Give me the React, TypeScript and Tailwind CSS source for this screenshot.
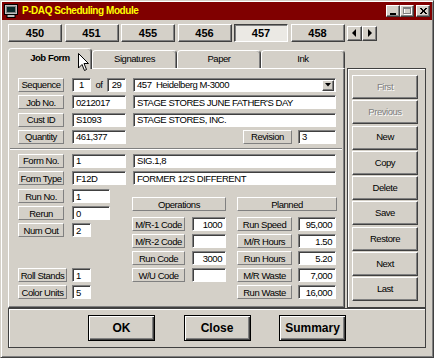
import React from "react";

const narrow = "font-['Liberation_Sans',Arial,sans-serif] tracking-[-0.45px]";
const wide = "font-['Liberation_Sans',Arial,sans-serif] tracking-normal";

const raised =
  "border border-t-white border-l-white border-r-[#404040] border-b-[#404040] shadow-[inset_-1px_-1px_#808080] bg-[#d4d0c8]";
const flat =
  "border border-t-white border-l-white border-r-[#808080] border-b-[#808080] bg-[#d4d0c8]";
const sunken =
  "border border-t-[#808080] border-l-[#808080] border-r-white border-b-white shadow-[inset_1px_1px_#404040] bg-white";

function Label({ text, w }: { text: string; w: string }) {
  return (
    <div className={`${flat} ${w} h-[14px] shrink-0 flex items-center justify-center text-[9.5px] leading-none whitespace-nowrap`}>
      {text}
    </div>
  );
}

function Field({ value, w, align = "left" }: { value: string; w: string; align?: "left" | "right" | "center" }) {
  const a = align === "right" ? "justify-end pr-[3px]" : align === "center" ? "justify-center" : "justify-start pl-[3px]";
  return (
    <div className={`${sunken} ${w} h-[14px] shrink-0 flex items-center ${a} text-[9.5px] leading-none whitespace-pre`}>
      {value}
    </div>
  );
}

function Row({ children, className = "" }: { children: React.ReactNode; className?: string }) {
  return <div className={`flex items-center h-[14px] ${className}`}>{children}</div>;
}

function MonitorIcon() {
  return (
    <svg width="14" height="14" viewBox="0 0 14 14">
      <rect x="0.5" y="0.5" width="13" height="10" fill="#c0c0c0" stroke="#000" />
      <rect x="2.5" y="2.5" width="9" height="6" fill="#0a2a2a" stroke="#808080" />
      <rect x="3" y="10.5" width="8" height="3" fill="#c0c0c0" stroke="#000" />
    </svg>
  );
}

function CapButton({ kind }: { kind: "min" | "max" | "close" }) {
  return (
    <div className={`${raised} w-[14px] h-[12px] flex items-center justify-center ${kind === "close" ? "ml-[2px]" : ""}`}>
      <svg width="10" height="9" viewBox="0 0 10 9">
        {kind === "min" && <rect x="2" y="6" width="6" height="2" fill="#000" />}
        {kind === "max" && (
          <>
            <rect x="2.5" y="1.5" width="7" height="6" fill="none" stroke="#ffffff" />
            <rect x="1.5" y="0.5" width="7" height="6" fill="none" stroke="#808080" />
            <rect x="1.5" y="0.5" width="7" height="1.5" fill="#808080" />
          </>
        )}
        {kind === "close" && (
          <path d="M2 1 L8 7 M3 1 L9 7 M8 1 L2 7 M9 1 L3 7" stroke="#000" strokeWidth="1" />
        )}
      </svg>
    </div>
  );
}

function Cursor() {
  return (
    <svg className="absolute left-[77px] top-[52px] z-20" width="12" height="19" viewBox="0 0 12 19">
      <path
        d="M0.5 0.5 L0.5 15 L4 11.5 L6.5 17.5 L8.5 16.5 L6 10.5 L10.5 10.5 Z"
        fill="#fff"
        stroke="#000"
        strokeLinejoin="miter"
      />
    </svg>
  );
}

const records = ["450", "451", "455", "456", "457", "458"];
const tabs = [
  { name: "Job Form", w: "w-[84px]" },
  { name: "Signatures", w: "w-[85px]" },
  { name: "Paper", w: "w-[84px]" },
  { name: "Ink", w: "w-[84px]" },
];
const actions = [
  { name: "First", off: true },
  { name: "Previous", off: true },
  { name: "New" },
  { name: "Copy" },
  { name: "Delete" },
  { name: "Save" },
  { name: "Restore" },
  { name: "Next" },
  { name: "Last" },
];
const operations = [
  { label: "M/R-1 Code", value: "1000" },
  { label: "M/R-2 Code", value: "" },
  { label: "Run Code", value: "3000" },
  { label: "W/U Code", value: "" },
];
const planned = [
  { label: "Run Speed", value: "95,000" },
  { label: "M/R Hours", value: "1.50" },
  { label: "Run Hours", value: "5.20" },
  { label: "M/R Waste", value: "7,000" },
  { label: "Run Waste", value: "16,000" },
];

export default function App() {
  return (
    <div
      className={`relative w-[434px] h-[358px] bg-[#d4d0c8] border border-t-[#d4d0c8] border-l-[#d4d0c8] border-r-[#404040] border-b-[#404040] shadow-[inset_1px_1px_white,inset_-1px_-1px_#808080] p-[1px] flex flex-col text-black ${narrow}`}
    >
      {/* title bar */}
      <div className="h-[18px] bg-[#800000] flex items-center pl-[2px] pr-[2px]">
        <MonitorIcon />
        <span className="ml-[4px] text-[10px] font-bold text-[#ffff00] leading-none">P-DAQ Scheduling Module</span>
        <div className="ml-auto flex items-center">
          <CapButton kind="min" />
          <CapButton kind="max" />
          <CapButton kind="close" />
        </div>
      </div>

      {/* record selector */}
      <div className="mt-[4px] pl-[6px] flex items-center gap-[2.5px]">
        {records.map((r) => (
          <div
            key={r}
            className={`w-[54px] h-[18px] flex items-center justify-center text-[11px] font-bold ${wide} ${
              r === "457"
                ? "border border-t-[#404040] border-l-[#404040] border-r-white border-b-white shadow-[inset_1px_1px_#808080] bg-[#ebe9e4]"
                : raised
            }`}
          >
            {r}
          </div>
        ))}
        <div className="flex">
          <div className={`${raised} w-[15px] h-[15px] flex items-center justify-center`}>
            <svg width="5" height="8" viewBox="0 0 5 8">
              <path d="M4 0 L0 4 L4 8 Z" fill="#000" />
            </svg>
          </div>
          <div className={`${raised} w-[15px] h-[15px] flex items-center justify-center`}>
            <svg width="5" height="8" viewBox="0 0 5 8">
              <path d="M1 0 L5 4 L1 8 Z" fill="#000" />
            </svg>
          </div>
        </div>
      </div>

      {/* main area */}
      <div className="mt-[6px] ml-[6px] w-[418px] flex">
        <div className="w-[337px] flex flex-col">
          <div className="h-[20px] flex items-end">
            {tabs.map((t, i) =>
              i === 0 ? (
                <div
                  key={t.name}
                  className={`${t.w} h-[21px] -mb-[1px] relative z-10 bg-[#d4d0c8] rounded-t-[4px] border-t border-l border-r border-t-white border-l-white border-r-[#404040] shadow-[inset_-1px_0_#808080] flex items-center justify-center pb-[2px] text-[9.5px] font-bold`}
                >
                  {t.name}
                </div>
              ) : (
                <div
                  key={t.name}
                  className={`${t.w} h-[18px] rounded-t-[4px] border-t border-l border-r border-t-white border-l-white border-r-[#404040] shadow-[inset_-1px_0_#808080] flex items-center justify-center text-[9.5px]`}
                >
                  {t.name}
                </div>
              )
            )}
          </div>

          {/* job form panel */}
          <div className="h-[240px] border border-t-white border-l-white border-r-[#404040] border-b-[#404040] shadow-[inset_-1px_-1px_#808080] pl-[9px] pt-[9px] flex flex-col">
            <div className="flex flex-col gap-[3.3px]">
              <Row>
                <Label text="Sequence" w="w-[46px]" />
                <div className="ml-[8px]">
                  <Field value="1" w="w-[19px]" align="center" />
                </div>
                <span className="w-[16px] text-center text-[9.5px] leading-none">of</span>
                <Field value="29" w="w-[19px]" align="center" />
                <div className={`${sunken} ml-[7px] w-[203px] h-[14px] flex items-center pl-[3px] pr-[1px] text-[9.5px] leading-none whitespace-pre`}>
                  457  Heidelberg M-3000
                  <div className={`${raised} ml-auto w-[12px] h-[11px] flex items-center justify-center`}>
                    <svg width="6" height="4" viewBox="0 0 6 4">
                      <path d="M0 0 L6 0 L3 3.5 Z" fill="#000" />
                    </svg>
                  </div>
                </div>
              </Row>
              <Row>
                <Label text="Job No." w="w-[46px]" />
                <div className="ml-[8px]">
                  <Field value="0212017" w="w-[54px]" />
                </div>
                <div className="ml-[7px]">
                  <Field value="STAGE STORES JUNE FATHER'S DAY" w="w-[203px]" />
                </div>
              </Row>
              <Row>
                <Label text="Cust ID" w="w-[46px]" />
                <div className="ml-[8px]">
                  <Field value="S1093" w="w-[54px]" />
                </div>
                <div className="ml-[7px]">
                  <Field value="STAGE STORES, INC." w="w-[203px]" />
                </div>
              </Row>
              <Row>
                <Label text="Quantity" w="w-[46px]" />
                <div className="ml-[8px]">
                  <Field value="461,377" w="w-[54px]" />
                </div>
                <div className="ml-[117px]">
                  <Label text="Revision" w="w-[49px]" />
                </div>
                <div className="ml-[6px]">
                  <Field value="3" w="w-[38px]" />
                </div>
              </Row>
            </div>

            <div className="mt-[4px] -ml-[8px] w-[332px] h-[2px] border-t border-t-[#808080] border-b border-b-white" />

            <div className="mt-[4px] flex flex-col gap-[3.5px]">
              <Row>
                <Label text="Form No." w="w-[46px]" />
                <div className="ml-[8px]">
                  <Field value="1" w="w-[54px]" />
                </div>
                <div className="ml-[7px]">
                  <Field value="SIG.1,8" w="w-[203px]" />
                </div>
              </Row>
              <Row>
                <Label text="Form Type" w="w-[46px]" />
                <div className="ml-[8px]">
                  <Field value="F12D" w="w-[54px]" />
                </div>
                <div className="ml-[7px]">
                  <Field value="FORMER 12'S DIFFERENT" w="w-[203px]" />
                </div>
              </Row>
            </div>

            <div className="mt-[4px] h-[110px] flex">
              <div className="w-[114px] flex flex-col">
                <div className="flex flex-col gap-[3px]">
                  <Row>
                    <Label text="Run No." w="w-[46px]" />
                    <div className="ml-[8px]">
                      <Field value="1" w="w-[38px]" />
                    </div>
                  </Row>
                  <Row>
                    <Label text="Rerun" w="w-[46px]" />
                    <div className="ml-[8px]">
                      <Field value="0" w="w-[38px]" />
                    </div>
                  </Row>
                  <Row>
                    <Label text="Num Out" w="w-[46px]" />
                    <div className="ml-[8px]">
                      <Field value="2" w="w-[19px]" />
                    </div>
                  </Row>
                </div>
                <div className="mt-[31px] flex flex-col gap-[3px]">
                  <Row>
                    <Label text="Roll Stands" w="w-[49px]" />
                    <div className="ml-[5px]">
                      <Field value="1" w="w-[19px]" />
                    </div>
                  </Row>
                  <Row>
                    <Label text="Color Units" w="w-[49px]" />
                    <div className="ml-[5px]">
                      <Field value="5" w="w-[19px]" />
                    </div>
                  </Row>
                </div>
              </div>

              <div className="w-[94px] pt-[8px] flex flex-col">
                <div className={`${flat} h-[14px] flex items-center justify-center text-[9.5px] leading-none`}>Operations</div>
                <div className="mt-[6px] flex flex-col gap-[3px]">
                  {operations.map((o) => (
                    <Row key={o.label}>
                      <Label text={o.label} w="w-[53px]" />
                      <div className="ml-[7px]">
                        <Field value={o.value} w="w-[34px]" align="right" />
                      </div>
                    </Row>
                  ))}
                </div>
              </div>

              <div className="ml-[11px] w-[100px] pt-[8px] flex flex-col">
                <div className={`${flat} h-[14px] flex items-center justify-center text-[9.5px] leading-none`}>Planned</div>
                <div className="mt-[6px] flex flex-col gap-[3px]">
                  {planned.map((p) => (
                    <Row key={p.label}>
                      <Label text={p.label} w="w-[55px]" />
                      <div className="ml-[6px]">
                        <Field value={p.value} w="w-[38px]" align="right" />
                      </div>
                    </Row>
                  ))}
                </div>
              </div>
            </div>
          </div>
        </div>

        {/* action buttons */}
        <div className="ml-[2px] w-[79px] flex flex-col">
          <div className="h-[20px]" />
          <div className="h-[240px] border border-[#404040] shadow-[inset_1px_1px_white] pt-[6px] pl-[4px] flex flex-col gap-[1.3px]">
            {actions.map((a) => (
              <div
                key={a.name}
                className={`${raised} w-[66px] h-[24px] flex items-center justify-center text-[9.5px] ${
                  a.off ? "text-[#808080] [text-shadow:1px_1px_0_#ffffff]" : ""
                }`}
              >
                {a.name}
              </div>
            ))}
          </div>
        </div>
      </div>

      {/* dialog buttons */}
      <div className="ml-[6px] w-[418px] h-[40px] border border-[#404040] shadow-[inset_1px_1px_white] flex items-center pl-[79px] gap-[28.5px]">
        {["OK", "Close", "Summary"].map((b) => (
          <div
            key={b}
            className={`w-[67px] h-[26px] border border-black shadow-[inset_1px_1px_white,inset_-1px_-1px_#404040,inset_-2px_-2px_#808080] bg-[#d4d0c8] flex items-center justify-center text-[12px] font-bold ${wide}`}
          >
            {b}
          </div>
        ))}
      </div>

      <Cursor />
    </div>
  );
}
